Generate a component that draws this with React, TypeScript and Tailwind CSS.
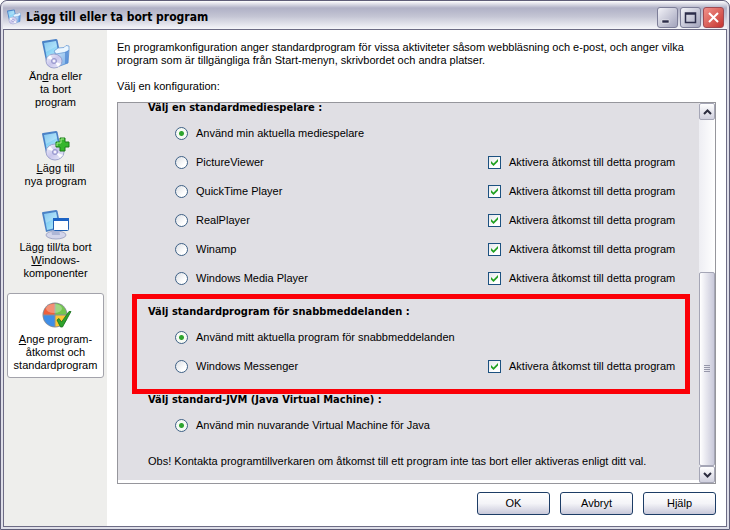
import React, { useState } from "react";

function Monitor() {
  return (
    <>
      <path d="M2 4 Q2 3 3 3 L16 1 Q17 1 17.500 2 L21 19 L6 23 Z" fill="#4b82c6" />
      <path d="M4 5 L16 3 L19 18 L7 21 Z" fill="url(#screen)" />
      <path d="M4 5 L16 3 L17 8 L6 14 Z" fill="#fff" opacity="0.25" />
    </>
  );
}

function Disc({ cx, cy, r }: { cx: number; cy: number; r: number }) {
  return (
    <>
      <ellipse cx={cx} cy={cy} rx={r} ry={r - 1} fill="url(#disc)" stroke="#8d93c4" strokeWidth="0.8" />
      <path d={`M${cx} ${cy} l-${r - 1} -3 l3 -3 Z`} fill="#fff" opacity="0.9" />
      <path d={`M${cx} ${cy} l${r - 1} 3 l-3 3 Z`} fill="#fff" opacity="0.9" />
      <circle cx={cx} cy={cy} r="2.600" fill="#c3bfe8" stroke="#7b7fba" strokeWidth="0.6" />
      <circle cx={cx} cy={cy} r="1.100" fill="#fff" />
    </>
  );
}

function Defs() {
  return (
    <svg width="0" height="0" className="absolute" aria-hidden="true">
      <defs>
        <linearGradient id="screen" x1="0" y1="0" x2="1" y2="1">
          <stop offset="0" stopColor="#5fb4ea" />
          <stop offset="0.5" stopColor="#8fd6f6" />
          <stop offset="1" stopColor="#b9ecfb" />
        </linearGradient>
        <linearGradient id="disc" x1="0" y1="0" x2="1" y2="1">
          <stop offset="0" stopColor="#f3f4fb" />
          <stop offset="0.5" stopColor="#c9c6ec" />
          <stop offset="1" stopColor="#eceefa" />
        </linearGradient>
        <linearGradient id="box" x1="0" y1="0" x2="1" y2="1">
          <stop offset="0" stopColor="#cfe9fb" />
          <stop offset="1" stopColor="#6fa6e4" />
        </linearGradient>
      </defs>
    </svg>
  );
}

function ChangeIcon({ size = 32 }: { size?: number }) {
  return (
    <svg width={size} height={size} viewBox="0 0 32 32" aria-hidden="true">
      <Monitor />
      <path d="M15 14 L27 12 L29 12 L28 25 L17 29 Z" fill="url(#box)" stroke="#5c8fd0" strokeWidth="0.8" />
      <path d="M14 13 L18 10 L24 9.500 L26 7.500 L29 8 L29 12 L27 14 L16 16 Z" fill="#eaf6ff" stroke="#6b9cd6" strokeWidth="0.8" />
      <path d="M25 14 L28.500 12 L28 25 L25 26 Z" fill="#4d86d2" opacity="0.7" />
      <Disc cx={14} cy={23} r={8} />
    </svg>
  );
}

function AddIcon() {
  return (
    <svg width="32" height="32" viewBox="0 0 32 32" aria-hidden="true">
      <Monitor />
      <Disc cx={15} cy={22} r={9} />
      <path d="M20 8 h5 v4 h4 v5 h-4 v4 h-5 v-4 h-4 v-5 h4 Z" fill="#35b62c" stroke="#1d7d1a" strokeWidth="1" />
      <path d="M24 9 h-3 v4 h-4 v3" stroke="#a5ee8b" strokeWidth="1" fill="none" />
    </svg>
  );
}

function ComponentsIcon() {
  return (
    <svg width="32" height="32" viewBox="0 0 32 32" aria-hidden="true">
      <ellipse cx="16" cy="26" rx="10" ry="4" fill="#d3d5ea" stroke="#9299bd" strokeWidth="0.8" />
      <path d="M11 20 h8 l1 6 h-8 Z" fill="#aeb6d6" />
      <Monitor />
      <rect x="13.500" y="9.500" width="15" height="12" rx="1" fill="#fff" stroke="#1f5fb0" />
      <rect x="13" y="9" width="16" height="3" fill="#1c63c4" />
    </svg>
  );
}

function DefaultsIcon() {
  return (
    <svg width="32" height="32" viewBox="0 0 32 32" aria-hidden="true">
      <circle cx="15" cy="14" r="12.500" fill="#8a8f98" />
      <path d="M14.500 13.500 V2.500 A11 11 0 0 0 3.500 13.500 Z" fill="#f0603a" />
      <path d="M15.500 13.500 V2.500 A11 11 0 0 1 26.500 13.500 Z" fill="#72c64e" />
      <path d="M14.500 14.500 V25.500 A11 11 0 0 1 3.500 14.500 Z" fill="#3f8ee6" />
      <path d="M15.500 14.500 V25.500 A11 11 0 0 0 26.500 14.500 Z" fill="#fbc735" />
      <ellipse cx="14" cy="7.500" rx="8" ry="4.500" fill="#fff" opacity="0.3" />
      <path d="M17 19 L19 17.500 L21.500 21 L29 10.500 L31 10.500 L22.500 26 L20.500 26 Z" fill="#2fa32b" stroke="#17701a" strokeWidth="0.8" />
    </svg>
  );
}

const ACCESS = "Aktivera åtkomst till detta program";

function Option({ group, label, access, checked }: { group: string; label: string; access?: boolean; checked?: boolean }) {
  const [enabled, setEnabled] = useState(true);
  return (
    <div className="flex h-[29px] items-center pl-[27px]">
      <label className="flex w-[313px] shrink-0 items-center gap-2">
        <input
          type="radio"
          name={group}
          defaultChecked={checked}
          className="size-[13px] shrink-0 appearance-none rounded-full border border-[#3f6186] bg-[linear-gradient(135deg,#dcdfe4,#ffffff_70%)] checked:bg-[radial-gradient(circle,#2fa52f_0,#2fa52f_2px,#f6faf4_3px)]"
        />
        {label}
      </label>
      {access && (
        <label className="flex items-center gap-2 whitespace-nowrap">
          <span className="grid">
            <input
              type="checkbox"
              checked={enabled}
              onChange={(e) => setEnabled(e.target.checked)}
              className="peer col-start-1 row-start-1 size-[13px] appearance-none border border-[#1c5180] bg-[linear-gradient(135deg,#e4e6ea,#ffffff_70%)]"
            />
            <svg viewBox="0 0 13 13" className="pointer-events-none invisible col-start-1 row-start-1 size-[13px] peer-checked:visible" aria-hidden="true">
              <path d="M3 5 L5.500 7.500 L10 3 V5.500 L5.500 10 L3 7.500 Z" fill="#21a121" />
            </svg>
          </span>
          {ACCESS}
        </label>
      )}
    </div>
  );
}

function Section({ title, highlighted, children }: { title: string; highlighted?: boolean; children: React.ReactNode }) {
  return (
    <div className="relative">
      <fieldset>
        <legend className="mb-[5px] font-['DejaVu_Sans_Condensed','DejaVu_Sans',sans-serif] font-bold">{title}</legend>
        {children}
      </fieldset>
      {highlighted && (
        <span className="pointer-events-none absolute -top-[11px] -right-[3px] -bottom-[13px] -left-[16px] border-[5px] border-[#fb0007]" />
      )}
    </div>
  );
}

function NavItem({ icon, active, children }: { icon: React.ReactNode; active?: boolean; children: React.ReactNode }) {
  return (
    <button
      type="button"
      className={
        active
          ? "flex flex-col items-center rounded-[3px] border border-[#a3a3ab] bg-white pt-[7px] pb-[5px]"
          : "flex flex-col items-center rounded-[3px] border border-transparent pt-[7px] pb-[5px]"
      }
    >
      {icon}
      <span className="text-center whitespace-nowrap">{children}</span>
    </button>
  );
}

function DialogButton({ children }: { children: React.ReactNode }) {
  return (
    <button
      type="button"
      className="h-[23px] w-[73px] rounded-[3px] border border-[#1d3d66] bg-linear-to-b from-white via-[#f4f4f8] to-[#c9c9da]"
    >
      {children}
    </button>
  );
}

const caption =
  "grid size-[21px] place-items-center rounded-[3px] border border-[#7d7e98] bg-linear-to-br from-[#f2f2f7] to-[#a3a4bc]";
const arrow =
  "grid h-[17px] w-4 shrink-0 place-items-center rounded-[2px] border border-[#a5a6b6] bg-linear-to-b from-white to-[#d0d0de]";

const players = ["PictureViewer", "QuickTime Player", "RealPlayer", "Winamp", "Windows Media Player"];

export default function App() {
  return (
    <div className="flex h-screen flex-col rounded-t-[7px] border border-[#5f5e78] bg-[#dedee8] px-[2px] pb-[2px] font-['Liberation_Sans',Arial,sans-serif] text-[11px] leading-[13px] text-black">
      <Defs />
      <header className="flex h-7 shrink-0 items-center gap-1 rounded-t-[5px] bg-[linear-gradient(to_bottom,#ffffff,#b0b1c6_25%,#c4c5d4_55%,#f6f6fa)] pt-1 pr-[3px] pl-[3px]">
        <ChangeIcon size={16} />
        <h1 className="flex-1 font-['DejaVu_Sans_Condensed','DejaVu_Sans',sans-serif] text-[12px] font-bold">Lägg till eller ta bort program</h1>
        <div className="flex gap-[2px]">
          <button type="button" aria-label="Minimera" className={caption}>
            <svg width="15" height="15" viewBox="0 0 15 15"><path d="M2 10 h7 v3 h-7 Z" fill="#2c2d4a" stroke="#fff" strokeWidth="0.5" /></svg>
          </button>
          <button type="button" aria-label="Maximera" className={caption}>
            <svg width="15" height="15" viewBox="0 0 15 15"><path d="M2.500 3 h10 v9.500 h-10 Z M2 4 h11" fill="none" stroke="#2c2d4a" strokeWidth="1.500" /></svg>
          </button>
          <button type="button" aria-label="Stäng" className="grid size-[21px] place-items-center rounded-[3px] border border-[#a04a52] bg-linear-to-br from-[#f0908a] to-[#c5302f]">
            <svg width="15" height="15" viewBox="0 0 15 15"><path d="M3 3 L12 12 M12 3 L3 12" stroke="#fff" strokeWidth="2" /></svg>
          </button>
        </div>
      </header>
      <div className="flex min-h-0 flex-1 border border-[#6d6c85] bg-white">
        <nav className="flex w-[103px] shrink-0 flex-col gap-[7px] bg-[#eeeeec] px-[3px]">
          <NavItem icon={<ChangeIcon />}>Än<u>d</u>ra eller<br />ta bort<br />program</NavItem>
          <NavItem icon={<AddIcon />}><u>L</u>ägg till<br />nya program</NavItem>
          <NavItem icon={<ComponentsIcon />}>Lägg till/ta bort<br /><u>W</u>indows-<br />komponenter</NavItem>
          <NavItem active icon={<DefaultsIcon />}><u>A</u>nge program-<br />åtkomst och<br />standardprogram</NavItem>
        </nav>
        <main className="flex min-w-0 flex-1 flex-col pt-[11px] pr-[10px] pb-[11px] pl-[10px]">
          <p>
            En programkonfiguration anger standardprogram för vissa aktiviteter såsom webbläsning och e-post, och anger vilka program som är tillgängliga från Start-menyn, skrivbordet och andra platser.
          </p>
          <p className="mt-[13px]">Välj en konfiguration:</p>
          <div className="mt-[9px] flex min-h-0 flex-1 border border-[#96969c] bg-white">
            <div className="mb-[3px] flex min-w-0 flex-1 flex-col justify-end overflow-hidden bg-[#e0dfe4] pr-3 pb-3 pl-[30px]">
              <div className="flex flex-col gap-3">
                <Section title="Välj en standardmediespelare :">
                  <Option group="media" label="Använd min aktuella mediespelare" checked />
                  {players.map((p) => (
                    <Option key={p} group="media" label={p} access />
                  ))}
                </Section>
                <Section title="Välj standardprogram för snabbmeddelanden :" highlighted>
                  <Option group="im" label="Använd mitt aktuella program för snabbmeddelanden" checked />
                  <Option group="im" label="Windows Messenger" access />
                </Section>
                <Section title="Välj standard-JVM (Java Virtual Machine) :">
                  <Option group="jvm" label="Använd min nuvarande Virtual Machine för Java" checked />
                </Section>
              </div>
              <p className="mt-[15px]">Obs! Kontakta programtillverkaren om åtkomst till ett program inte tas bort eller aktiveras enligt ditt val.</p>
            </div>
            <div className="flex w-4 shrink-0 flex-col bg-linear-to-r from-[#eeeef3] to-white">
              <button type="button" aria-label="Rulla uppåt" className={arrow}>
                <svg width="9" height="6" viewBox="0 0 9 6"><path d="M1 5 L4.500 1.500 L8 5" fill="none" stroke="#2b2c3e" strokeWidth="2" /></svg>
              </button>
              <div className="flex-[152]" />
              <div className="flex flex-[193] flex-col items-center justify-center gap-px rounded-[2px] border border-[#a5a6b6] bg-linear-to-r from-white to-[#c9c9da]">
                <span className="h-px w-[6px] bg-[#9697aa]" />
                <span className="h-px w-[6px] bg-[#9697aa]" />
                <span className="h-px w-[6px] bg-[#9697aa]" />
                <span className="h-px w-[6px] bg-[#9697aa]" />
              </div>
              <button type="button" aria-label="Rulla nedåt" className={arrow}>
                <svg width="9" height="6" viewBox="0 0 9 6"><path d="M1 1 L4.500 4.500 L8 1" fill="none" stroke="#2b2c3e" strokeWidth="2" /></svg>
              </button>
            </div>
          </div>
          <div className="mt-2 flex justify-end gap-[10px]">
            <DialogButton>OK</DialogButton>
            <DialogButton>Avbryt</DialogButton>
            <DialogButton>Hjälp</DialogButton>
          </div>
        </main>
      </div>
    </div>
  );
}
